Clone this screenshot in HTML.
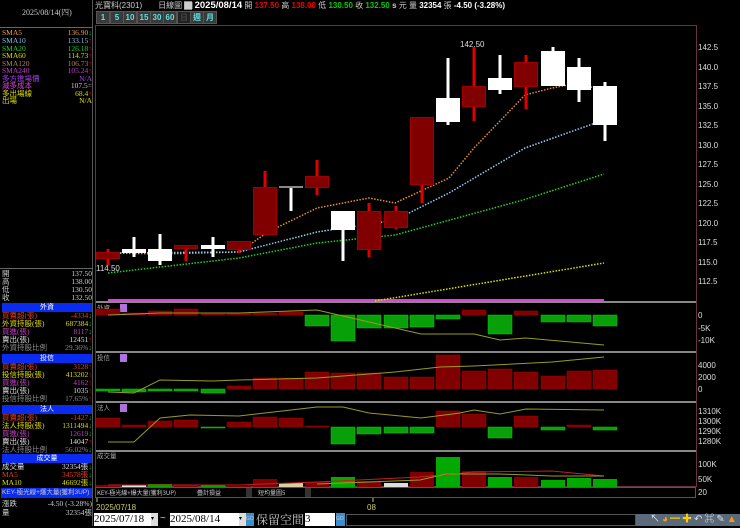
<!DOCTYPE html><html><head><meta charset="utf-8"><style>
*{margin:0;padding:0;box-sizing:border-box}
body{width:740px;height:526px;background:#000;position:relative;overflow:hidden;font-family:"Liberation Sans","Noto Sans CJK TC",sans-serif;color:#ddd}
.a{position:absolute;white-space:nowrap}
.s{font-family:"Liberation Serif","Noto Serif CJK SC",serif;font-size:8px;line-height:8px}
.row{position:absolute;left:2px;width:90px;height:8px;font-size:7.5px;line-height:8px;font-family:"Liberation Serif","Noto Sans CJK TC",serif}
.row span{position:absolute;right:0}
.hd{position:absolute;left:2px;width:90px;height:9px;background:#0a2cf0;color:#fff;font-size:7px;line-height:9px;text-align:center}
.btn{position:absolute;top:11px;height:13px;width:14px;background:#3a3a3a;border:1px solid #555;color:#5fe0e0;font-size:8px;line-height:11px;text-align:center;font-weight:bold}
</style></head><body>
<!-- left panel -->
<div class="a" style="left:0;top:0;width:93px;height:526px;border-right:1px solid #555"></div>
<div class="a s" style="left:22px;top:9px;color:#ccc">2025/08/14(四)</div>
<div class="a" style="left:0;top:27px;width:93px;border-top:1px solid #666"></div>
<div class="row" style="top:29px;color:#e8a040">SMA5<span>136.90<b style="color:#0c0">↓</b></span></div>
<div class="row" style="top:37px;color:#7ac0e0">SMA10<span>133.15<b style="color:#e00">↑</b></span></div>
<div class="row" style="top:45px;color:#2c2">SMA20<span>126.18<b style="color:#e00">↑</b></span></div>
<div class="row" style="top:52px;color:#dd0">SMA60<span>114.73<b style="color:#e00">↑</b></span></div>
<div class="row" style="top:60px;color:#b08060">SMA120<span>106.73<b style="color:#e00">↑</b></span></div>
<div class="row" style="top:67px;color:#c040c0">SMA240<span>105.24<b style="color:#e00">↑</b></span></div>
<div class="row" style="top:75px;color:#a040e0">多方進場價<span>N/A</span></div>
<div class="row" style="top:82px;color:#e040e0">減多成本<span style="color:#ccc">107.5=</span></div>
<div class="row" style="top:90px;color:#dd0">多出場線<span>68.4<b style="color:#e00">↑</b></span></div>
<div class="row" style="top:97px;color:#dd0">出場<span>N/A</span></div>
<div class="a" style="left:0;top:268px;width:93px;border-top:1px solid #666"></div>
<div class="row" style="top:270px;color:#ccc">開<span>137.50</span></div>
<div class="row" style="top:278px;color:#ccc">高<span>138.00</span></div>
<div class="row" style="top:286px;color:#ccc">低<span>130.50</span></div>
<div class="row" style="top:294px;color:#ccc">收<span>132.50</span></div>
<div class="hd" style="top:303px">外資</div>
<div class="row" style="top:312px;color:#e04020">買賣超(張)<span>-4334<b style="color:#0c0">↓</b></span></div>
<div class="row" style="top:320px;color:#dd0">外資持股(張)<span>687384<b style="color:#0c0">↓</b></span></div>
<div class="row" style="top:328px;color:#c040c0">買進(張)<span>8117<b style="color:#0c0">↓</b></span></div>
<div class="row" style="top:336px;color:#ddd">賣出(張)<span>12451<b style="color:#e00">↑</b></span></div>
<div class="row" style="top:344px;color:#888">外資持股比例<span>29.36%<b style="color:#0c0">↓</b></span></div>
<div class="hd" style="top:354px">投信</div>
<div class="row" style="top:363px;color:#e04020">買賣超(張)<span>3128<b style="color:#e00">↑</b></span></div>
<div class="row" style="top:371px;color:#dd0">投信持股(張)<span>413202<b style="color:#e00">↑</b></span></div>
<div class="row" style="top:379px;color:#c040c0">買進(張)<span>4162<b style="color:#e00">↑</b></span></div>
<div class="row" style="top:387px;color:#ddd">賣出(張)<span>1035<b style="color:#e00">↑</b></span></div>
<div class="row" style="top:395px;color:#888">投信持股比例<span>17.65%<b style="color:#e00">↑</b></span></div>
<div class="hd" style="top:405px">法人</div>
<div class="row" style="top:414px;color:#e04020">買賣超(張)<span>-1427<b style="color:#0c0">↓</b></span></div>
<div class="row" style="top:422px;color:#dd0">法人持股(張)<span>1311494<b style="color:#0c0">↓</b></span></div>
<div class="row" style="top:430px;color:#c040c0">買進(張)<span>12619<b style="color:#0c0">↓</b></span></div>
<div class="row" style="top:438px;color:#ddd">賣出(張)<span>14047<b style="color:#e00">↑</b></span></div>
<div class="row" style="top:446px;color:#888">法人持股比例<span>56.02%<b style="color:#0c0">↓</b></span></div>
<div class="hd" style="top:454px">成交量</div>
<div class="row" style="top:463px;color:#ddd">成交量<span>32354張<b style="color:#0c0">↓</b></span></div>
<div class="row" style="top:471px;color:#e04020">MA5<span>34578張<b style="color:#0c0">↓</b></span></div>
<div class="row" style="top:479px;color:#dd0">MA10<span>46692張<b style="color:#0c0">↓</b></span></div>
<div class="a" style="left:1px;top:488px;width:91px;height:10px;background:#0a2cf0;color:#ccc;font-size:6.5px;line-height:10px;padding-left:1px">KEY-極光線+爆大量(獲利3UP)</div>
<div class="row" style="top:500px;color:#ccc">漲跌<span>-4.50 (-3.28%)</span></div>
<div class="row" style="top:509px;color:#ccc">量<span>32354張</span></div>

<!-- header -->
<div class="a" style="left:95px;top:1px;font-size:8px;line-height:9px;color:#ccc">光寶科(2301)　　日線圖 <span style="background:#888">▇</span> <b style="color:#fff;font-size:9.5px">2025/08/14</b> 開 <b style="color:#e00">137.50</b> 高 <b style="color:#e00">138.00</b> 低 <b style="color:#0c0">130.50</b> 收 <b style="color:#0c0">132.50</b> <b>s</b> 元 量 <b style="color:#fff">32354</b> 張 <b style="color:#fff">-4.50 (-3.28%)</b></div>
<div class="btn" style="left:96px">1</div><div class="btn" style="left:110px">5</div><div class="btn" style="left:123px">10</div><div class="btn" style="left:137px">15</div><div class="btn" style="left:150px">30</div><div class="btn" style="left:163px">60</div><div class="btn" style="left:177px;background:#222;color:#444">日</div><div class="btn" style="left:190px">週</div><div class="btn" style="left:203px">月</div>

<svg class="a" style="left:0;top:0" width="740" height="526">
<rect x="95.5" y="25.5" width="601" height="461" fill="none" stroke="#6a3048"/>
<g stroke="#888" stroke-width="2"><line x1="96" y1="302" x2="696" y2="302"/><line x1="96" y1="352" x2="696" y2="352"/><line x1="96" y1="402" x2="696" y2="402"/><line x1="96" y1="451" x2="696" y2="451"/></g>
<line x1="108" y1="300" x2="604" y2="300" stroke="#e040e0" stroke-width="2"/>
<!-- MA lines -->
<g fill="none" stroke-dasharray="1.5 1.5" stroke-width="1.5">
<polyline stroke="#e89030" points="108,253 161,254 239,252 268,232 317,208 369,198 395,203 449,178 474,148 525,95 552,88 578,83 604,91"/>
<polyline stroke="#8cd0f0" points="108,253 239,252 317,232 395,220 449,193 525,148 604,120"/>
<polyline stroke="#20d020" points="108,273 239,258 317,243 395,235 523,200 604,174"/>
<polyline stroke="#e0e000" points="375,301 604,263"/>
</g>
<!-- candles -->
<g fill="#fff" stroke="none">
<rect x="132.5" y="237" width="3" height="20"/><rect x="122" y="249" width="24" height="4"/>
<rect x="158.5" y="234" width="3" height="31"/><rect x="148" y="249" width="24" height="12"/>
<rect x="211.5" y="237" width="3" height="20"/><rect x="201" y="245" width="24" height="4"/>
<rect x="289.5" y="187" width="3" height="24"/><rect x="279" y="186" width="24" height="2" fill="#888"/>
<rect x="341.5" y="211" width="3" height="50"/><rect x="331" y="211" width="24" height="19"/>
<rect x="446.5" y="58" width="3" height="67"/><rect x="436" y="98" width="24" height="24"/>
<rect x="498.5" y="55" width="3" height="39"/><rect x="488" y="78" width="24" height="12"/>
<rect x="551.5" y="47" width="3" height="18"/><rect x="541" y="51" width="24" height="35"/>
<rect x="577.5" y="58" width="3" height="44"/><rect x="567" y="67" width="24" height="23"/>
<rect x="603.5" y="82" width="3" height="59"/><rect x="593" y="86" width="24" height="39"/>
</g>
<g>
<g fill="#e00000">
<rect x="106.5" y="249" width="3" height="16"/><rect x="184.5" y="245" width="3" height="16"/><rect x="237.5" y="241" width="3" height="12"/>
<rect x="263.5" y="171" width="3" height="63"/><rect x="315.5" y="160" width="3" height="35"/><rect x="367.5" y="203" width="3" height="54"/>
<rect x="394.5" y="206" width="3" height="23"/><rect x="420.5" y="117" width="3" height="86"/><rect x="472.5" y="47" width="3" height="74"/>
<rect x="524.5" y="55" width="3" height="54"/></g>
<g fill="#800000" stroke="#a00000">
<rect x="96.5" y="252.5" width="23" height="6"/><rect x="174.5" y="245.5" width="23" height="3"/><rect x="227.5" y="241.5" width="23" height="8"/>
<rect x="253.5" y="187.5" width="23" height="47"/><rect x="305.5" y="176.5" width="23" height="11"/><rect x="357.5" y="211.5" width="23" height="38"/>
<rect x="384.5" y="211.5" width="23" height="16"/><rect x="410.5" y="117.5" width="23" height="67"/><rect x="462.5" y="86.5" width="23" height="20"/>
<rect x="514.5" y="62.5" width="23" height="24"/></g>
</g>
<g font-family="Liberation Sans" font-size="8" fill="#ddd"><text x="460" y="47">142.50</text><text x="96" y="271">114.50</text></g>
<!-- axis labels -->
<g font-family="Liberation Sans" font-size="8" fill="#ddd">
<text x="698" y="50">142.5</text><text x="698" y="70">140.0</text><text x="698" y="89">137.5</text><text x="698" y="109">135.0</text><text x="698" y="128">132.5</text><text x="698" y="148">130.0</text><text x="698" y="167">127.5</text><text x="698" y="187">125.0</text><text x="698" y="206">122.5</text><text x="698" y="226">120.0</text><text x="698" y="245">117.5</text><text x="698" y="265">115.0</text><text x="698" y="284">112.5</text>
<text x="698" y="318">0</text><text x="698" y="331">-5K</text><text x="698" y="343">-10K</text>
<text x="698" y="368">4000</text><text x="698" y="380">2000</text><text x="698" y="392">0</text>
<text x="698" y="414">1310K</text><text x="698" y="424">1300K</text><text x="698" y="434">1290K</text><text x="698" y="444">1280K</text>
<text x="698" y="467">100K</text><text x="698" y="482">50K</text><text x="698" y="495">20</text>
</g>
<g font-family="Noto Sans CJK TC" font-size="6.5" fill="#aaa"><text x="97" y="310">外資</text><text x="97" y="360">投信</text><text x="97" y="410">法人</text><text x="97" y="458">成交量</text></g>
<g fill="#b070e0"><rect x="120" y="304" width="7" height="8"/><rect x="120" y="354" width="7" height="8"/><rect x="120" y="404" width="7" height="8"/></g>
<!-- 外資 bars zero 315 -->
<g fill="#800000" stroke="#a00000" stroke-width=".5">
<rect x="96" y="309" width="24" height="6"/><rect x="122" y="313" width="24" height="2"/><rect x="148" y="311" width="24" height="4"/><rect x="174" y="309" width="24" height="6"/><rect x="201" y="314" width="24" height="1"/><rect x="227" y="313" width="24" height="2"/><rect x="253" y="313" width="24" height="2"/><rect x="279" y="312" width="24" height="3"/><rect x="462" y="310" width="24" height="5"/><rect x="514" y="311" width="24" height="4"/></g>
<g fill="#08a008" stroke="#0c0" stroke-width=".5">
<rect x="305" y="315" width="24" height="11"/><rect x="331" y="315" width="24" height="26"/><rect x="357" y="315" width="24" height="13"/><rect x="384" y="315" width="24" height="13"/><rect x="410" y="315" width="24" height="12"/><rect x="436" y="315" width="24" height="4"/><rect x="488" y="315" width="24" height="19"/><rect x="541" y="315" width="24" height="7"/><rect x="567" y="315" width="24" height="7"/><rect x="593" y="315" width="24" height="11"/></g>
<polyline fill="none" stroke="#9a9a20" points="108,315 160,313 239,313 317,310 343,316 369,322 421,334 474,334 500,340 526,338 604,345"/>
<!-- 投信 zero 389 -->
<g fill="#800000" stroke="#a00000" stroke-width=".5">
<rect x="227" y="386" width="24" height="3"/><rect x="253" y="378" width="24" height="11"/><rect x="279" y="378" width="24" height="11"/><rect x="305" y="372" width="24" height="17"/><rect x="331" y="373" width="24" height="16"/><rect x="357" y="373" width="24" height="16"/><rect x="384" y="377" width="24" height="12"/><rect x="410" y="377" width="24" height="12"/><rect x="436" y="355" width="24" height="34"/><rect x="462" y="371" width="24" height="18"/><rect x="488" y="369" width="24" height="20"/><rect x="514" y="372" width="24" height="17"/><rect x="541" y="376" width="24" height="13"/><rect x="567" y="371" width="24" height="18"/><rect x="593" y="370" width="24" height="19"/></g>
<g fill="#08a008" stroke="#0c0" stroke-width=".5"><rect x="96" y="389" width="24" height="2"/><rect x="122" y="389" width="24" height="3"/><rect x="148" y="389" width="24" height="2"/><rect x="174" y="389" width="24" height="2"/><rect x="201" y="389" width="24" height="4"/></g>
<polyline fill="none" stroke="#9a9a20" points="108,392 134,393 160,380 213,381 239,380 317,378 395,372 440,367 474,366 552,362 604,357"/>
<!-- 法人 zero 427 -->
<g fill="#800000" stroke="#a00000" stroke-width=".5">
<rect x="96" y="418" width="24" height="9"/><rect x="122" y="425" width="24" height="2"/><rect x="148" y="421" width="24" height="6"/><rect x="174" y="420" width="24" height="7"/><rect x="227" y="422" width="24" height="5"/><rect x="253" y="417" width="24" height="10"/><rect x="279" y="418" width="24" height="9"/><rect x="305" y="426" width="24" height="1"/><rect x="436" y="411" width="24" height="16"/><rect x="462" y="414" width="24" height="13"/><rect x="514" y="416" width="24" height="11"/><rect x="567" y="425" width="24" height="2"/></g>
<g fill="#08a008" stroke="#0c0" stroke-width=".5"><rect x="201" y="427" width="24" height="1"/><rect x="331" y="427" width="24" height="17"/><rect x="357" y="427" width="24" height="7"/><rect x="384" y="427" width="24" height="6"/><rect x="410" y="427" width="24" height="6"/><rect x="488" y="427" width="24" height="11"/><rect x="541" y="427" width="24" height="3"/><rect x="593" y="427" width="24" height="3"/></g>
<polyline fill="none" stroke="#9a9a20" points="108,442 134,442 160,418 190,415 239,416 317,407 343,407 369,413 421,418 421,418 460,413 474,410 500,414 526,409 604,410"/>
<!-- volume base 487 -->
<g stroke-width=".5">
<rect x="96" y="485" width="24" height="2" fill="#800000"/><rect x="122" y="485" width="24" height="2" fill="#ddd"/><rect x="148" y="484" width="24" height="3" fill="#0a0"/><rect x="174" y="485" width="24" height="2" fill="#800000"/><rect x="201" y="485" width="24" height="2" fill="#0a0"/><rect x="227" y="486" width="24" height="1" fill="#800000"/><rect x="253" y="479" width="24" height="8" fill="#800000"/><rect x="279" y="483" width="24" height="4" fill="#d8d0a0"/><rect x="305" y="482" width="24" height="5" fill="#800000"/><rect x="331" y="477" width="24" height="10" fill="#0a0"/><rect x="357" y="481" width="24" height="6" fill="#800000"/><rect x="384" y="483" width="24" height="4" fill="#ddd"/><rect x="410" y="472" width="24" height="15" fill="#800000"/><rect x="436" y="457" width="24" height="30" fill="#0a0"/><rect x="462" y="471" width="24" height="16" fill="#800000"/><rect x="488" y="477" width="24" height="10" fill="#0a0"/><rect x="514" y="477" width="24" height="10" fill="#800000"/><rect x="541" y="480" width="24" height="7" fill="#0a0"/><rect x="567" y="478" width="24" height="9" fill="#0a0"/><rect x="593" y="479" width="24" height="8" fill="#0a0"/></g>
<polyline fill="none" stroke="#c02020" points="108,485 239,485 317,482 420,477 474,472 552,471 604,476"/>
<polyline fill="none" stroke="#9a9a20" points="317,484 420,480 446,474 500,474 552,476 604,476"/>
<!-- bottom bar -->
<rect x="95.5" y="487.5" width="600" height="10" fill="#000" stroke="#555"/>
<g font-family="Noto Sans CJK TC" font-size="6" fill="#ccc"><text x="97" y="495">KEY-極光線+爆大量(獲利3UP)</text><text x="197" y="495">疊計損益</text><text x="258" y="495">短均量圖5</text></g>
<rect x="246" y="488" width="6" height="9" fill="#333"/><rect x="305" y="488" width="6" height="9" fill="#333"/>
<line x1="97" y1="498" x2="97" y2="502" stroke="#cc6"/><line x1="373" y1="498" x2="373" y2="502" stroke="#cc6"/>
<g font-family="Liberation Sans" font-size="8" fill="#cc6"><text x="96" y="510">2025/07/18</text><text x="367" y="510">08</text></g>
</svg>
<!-- bottom toolbar -->
<div class="a" style="left:94px;top:513px;width:64px;height:13px;background:#fff;color:#000;font-family:'Liberation Serif',serif;font-size:11px;line-height:13px">2025/07/18<span style="position:absolute;right:0;top:0;width:7px;height:13px;background:#ddd;font-size:6px">▾</span></div>
<div class="a" style="left:160px;top:513px;color:#ccc;font-size:10px">~</div>
<div class="a" style="left:170px;top:513px;width:76px;height:13px;background:#fff;color:#000;font-family:'Liberation Serif',serif;font-size:11px;line-height:13px">2025/08/14<span style="position:absolute;right:0;top:0;width:7px;height:13px;background:#ddd;font-size:6px">▾</span></div>
<div class="a" style="left:246px;top:513px;width:8px;height:13px;background:#3a8fd0;color:#ccc;font-size:5px;line-height:13px">GO</div>
<div class="a" style="left:256px;top:511px;color:#ccc;font-size:12px;font-family:'Noto Serif CJK SC',serif">保留空間</div>
<div class="a" style="left:305px;top:513px;width:30px;height:13px;background:#fff;color:#000;font-family:'Liberation Serif',serif;font-size:11px;line-height:13px">3</div>
<div class="a" style="left:336px;top:513px;width:9px;height:13px;background:#3a8fd0;color:#ccc;font-size:5px;line-height:13px">GO</div>
<div class="a" style="left:346px;top:514px;width:290px;height:12px;background:#000;border:1px solid #555"></div>
<div class="a" style="left:636px;top:514px;width:104px;height:12px;background:#5a6a7a"></div>
<div class="a" style="left:650px;top:514px;color:#ddd;font-size:10px;line-height:12px;letter-spacing:2px">↖<span style="color:#f90">◕</span><span style="color:#fc0">━</span><span style="color:#fc0">✚</span>↶⌘✎<span style="color:#f90">▲</span></div>
</body></html>
